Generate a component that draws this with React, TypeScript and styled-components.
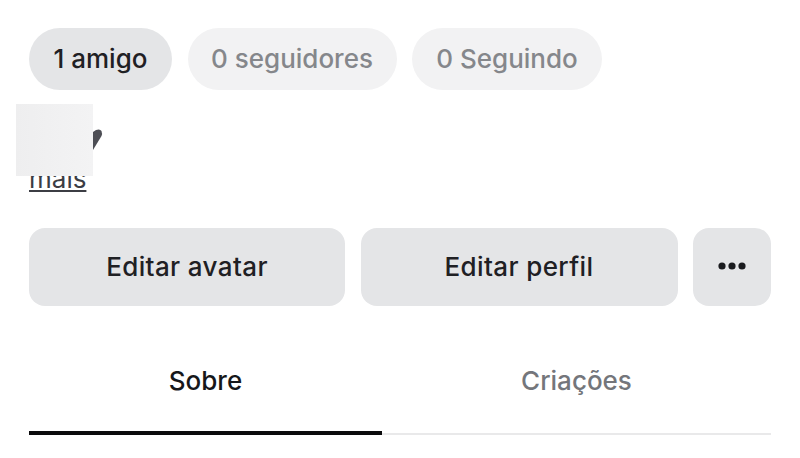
import React from "react";
import styled, { createGlobalStyle } from "styled-components";

const Global = createGlobalStyle`
  html, body { margin: 0; padding: 0; background: #fff; overflow: hidden; }
  body { font-family: Inter, "Noto Sans", sans-serif; }
`;

const Page = styled.div`
  position: relative;
  width: 800px;
  height: 458px;
  box-sizing: border-box;
  padding: 28px 29px 0;
  background: #fff;
`;

const PillRow = styled.div`
  display: flex;
  gap: 15.5px;
`;

const Pill = styled.div<{ $active?: boolean; $w: number }>`
  width: ${(p) => p.$w}px;
  height: 62px;
  box-sizing: border-box;
  padding-bottom: 2px;
  border-radius: 31px;
  display: flex;
  align-items: center;
  justify-content: center;
  font-size: 26px;
  font-weight: 500;
  background: ${(p) => (p.$active ? "#e4e5e7" : "#f2f2f3")};
  color: ${(p) => (p.$active ? "#1f2024" : "#85878b")};
`;

const Bio = styled.div`
  height: 138px;
  box-sizing: border-box;
  padding-top: 33px;
  color: #4d4e55;
`;

const BioLine = styled.div`
  height: 40px;
  display: flex;
  align-items: flex-start;
  padding-left: 52px;
`;

const Heart = styled.svg`
  width: 24px;
  height: 28px;
  display: block;
  margin-top: 5px;
`;

const More = styled.a`
  display: inline-block;
  font-size: 26px;
  line-height: 32px;
  color: #3c3d44;
  text-decoration: underline;
  text-decoration-thickness: 2px;
  text-underline-offset: 2px;
`;

const Patch = styled.div`
  position: absolute;
  left: 16px;
  top: 104px;
  width: 77px;
  height: 72px;
  background: linear-gradient(90deg, #eeeeef, #f3f3f4);
`;

const ButtonRow = styled.div`
  display: grid;
  grid-template-columns: 316px 317px 78px;
  gap: 16px 15.5px;
`;

const Button = styled.div`
  height: 78px;
  box-sizing: border-box;
  padding-bottom: 2px;
  border-radius: 16px;
  background: #e4e5e7;
  color: #1f2024;
  display: flex;
  align-items: center;
  justify-content: center;
  font-size: 26px;
  font-weight: 500;
  letter-spacing: 0.38px;
`;

const Dots = styled.svg`
  width: 30px;
  height: 10px;
`;

const Tabs = styled.div`
  display: flex;
  height: 129px;
  align-items: stretch;
`;

const Tab = styled.div<{ $active?: boolean; $w: number }>`
  width: ${(p) => p.$w}px;
  display: flex;
  align-items: center;
  justify-content: center;
  box-sizing: border-box;
  padding-top: ${(p) => (p.$active ? "23px" : "21px")};
  border-bottom: ${(p) => (p.$active ? "4px solid #0b0b0d" : "2px solid #e9e9ea")};
  font-size: 26px;
  font-weight: 500;
  color: ${(p) => (p.$active ? "#16171a" : "#74767b")};
`;

export default function App() {
  return (
    <Page>
      <Global />
      <PillRow>
        <Pill $active $w={143}>1 amigo</Pill>
        <Pill $w={209}>0 seguidores</Pill>
        <Pill $w={190}>0 Seguindo</Pill>
      </PillRow>
      <Bio>
        <BioLine>
          <Heart viewBox="0 0 24 28">
            <path d="M9 6 L15 2 Q19 0.5 20.5 3 Q21.5 5.5 20.5 8 L12 22 L7 22 Z" fill="#4d4e55" />
          </Heart>
        </BioLine>
        <More>mais</More>
      </Bio>
      <ButtonRow>
        <Button>Editar avatar</Button>
        <Button>Editar perfil</Button>
        <Button>
          <Dots viewBox="0 0 30 10">
            <circle cx="5" cy="5" r="3.6" fill="#1a1b1f" />
            <circle cx="15" cy="5" r="3.6" fill="#1a1b1f" />
            <circle cx="25" cy="5" r="3.6" fill="#1a1b1f" />
          </Dots>
        </Button>
      </ButtonRow>
      <Tabs>
        <Tab $active $w={353}>Sobre</Tab>
        <Tab $w={389}>Criações</Tab>
      </Tabs>
      <Patch />
    </Page>
  );
}
